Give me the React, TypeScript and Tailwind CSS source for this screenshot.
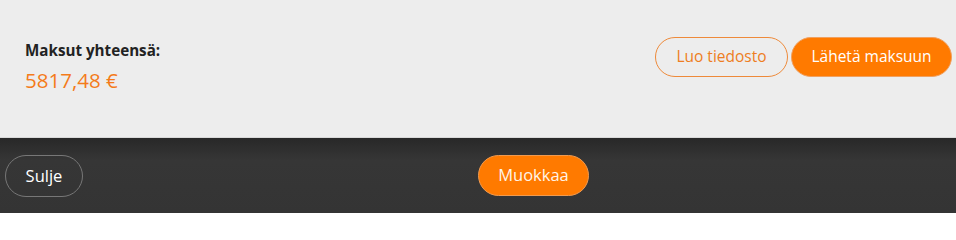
export default function App()
{
  return (
    <div className="flex h-[213px] w-[956px] flex-col overflow-hidden font-['Open_Sans',sans-serif]">
      {/* summary */}
      <div className="flex h-[138px] items-start justify-between border-b border-[#d9d9d9] bg-[#ededed]">
        <div className="pl-[25px] pt-[40px]">
          <div className="text-[15.2px] font-bold leading-[20px] text-[#222]">Maksut yhteensä:</div>
          <div className="mt-[6px] text-[20.5px] font-medium leading-[28px] text-[#f47b1a]">5817,48 €</div>
        </div>
        <div className="flex gap-[3px] pr-[4px] pt-[37px]">
          <button className="h-[40px] w-[133px] rounded-full border border-[#ee8a3a] text-[15.5px] font-medium text-[#ee7d22]">
            Luo tiedosto
          </button>
          <button className="h-[40px] w-[161px] rounded-full border border-[#f0a060] bg-[#ff7a00] text-[15.5px] font-medium text-white">
            Lähetä maksuun
          </button>
        </div>
      </div>

      {/* footer */}
      <div className="grid h-[75px] grid-cols-2 items-start bg-gradient-to-b from-[#282828] via-[#363636] via-30% to-[#343434] pt-[17px]">
        <div className="pl-[5px]">
          <button className="h-[42px] w-[78px] rounded-full border border-[#777] text-[16.5px] font-medium text-white">
            Sulje
          </button>
        </div>
        <div>
          <button className="h-[41px] w-[111px] rounded-full border border-[#f09a4f] bg-[#ff7a00] text-[16.5px] font-medium text-[#fff4e8]">
            Muokkaa
          </button>
        </div>
      </div>
    </div>
  );
}
